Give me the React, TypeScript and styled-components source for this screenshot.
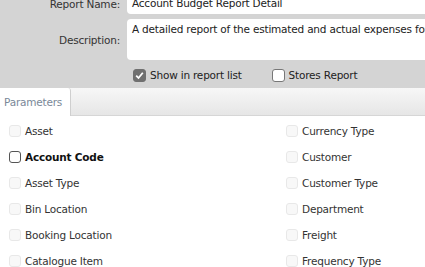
import React from 'react';
import styled, { createGlobalStyle } from 'styled-components';

const GlobalStyle = createGlobalStyle`
  html, body {
    margin: 0;
    padding: 0;
    background: #ffffff;
    font-family: "DejaVu Sans", Tahoma, sans-serif;
    font-size: 10.5px;
    letter-spacing: -0.2px;
    color: #222;
    overflow: hidden;
  }
`;

const Page = styled.div`
  width: 425px;
  height: 267px;
  overflow: hidden;
`;

const Header = styled.section`
  background: #d4d4d4;
  margin-top: -7px;
  padding-bottom: 6px;
`;

const FieldRow = styled.div`
  display: grid;
  grid-template-columns: 120px 1fr;
  column-gap: 7px;
  align-items: center;
  margin-bottom: 5px;
`;

const Label = styled.label`
  text-align: right;
  color: #333;
`;

const TextInput = styled.div`
  background: #fff;
  border-radius: 4px 0 0 4px;
  height: 21px;
  line-height: 21px;
  padding: 0 5px;
  white-space: nowrap;
  overflow: hidden;
`;

const TextArea = styled.div`
  background: #fff;
  border-radius: 4px 0 0 4px;
  height: 41px;
  padding: 4px 5px;
  box-sizing: border-box;
  white-space: nowrap;
  overflow: hidden;
`;

const OptionRow = styled.div`
  display: flex;
  align-items: center;
  padding-left: 133px;
  gap: 30px;
  height: 14px;
  margin-top: 8px;
`;

const Option = styled.label`
  display: flex;
  align-items: center;
  gap: 4px;
  color: #222;
`;

const Box = styled.span<{ $variant: 'checked' | 'empty' | 'disabled' | 'active' }>`
  display: inline-flex;
  align-items: center;
  justify-content: center;
  box-sizing: border-box;
  width: ${(p) => (p.$variant === 'checked' || p.$variant === 'empty' ? '13px' : '12px')};
  height: ${(p) => (p.$variant === 'checked' || p.$variant === 'empty' ? '13px' : '12px')};
  border-radius: 3px;
  flex-shrink: 0;
  background: ${(p) => (p.$variant === 'checked' ? '#707070' : p.$variant === 'disabled' ? '#f8f8f8' : '#fff')};
  border: 1px solid
    ${(p) =>
      p.$variant === 'checked' ? '#707070' : p.$variant === 'disabled' ? '#e8e8e8' : p.$variant === 'active' ? '#555' : '#777'};
`;

const TabBar = styled.nav`
  display: flex;
  height: 27px;
  background: linear-gradient(#f7f7f7, #e6e6e6);
  border-bottom: 1px solid #d6d6d6;
`;

const Tab = styled.div`
  display: flex;
  align-items: center;
  padding: 0 4px;
  width: 71px;
  box-sizing: border-box;
  background: #fff;
  border-right: 1px solid #cfcfcf;
  border-top-right-radius: 3px;
  color: #7a8898;
  height: 28px;
`;

const ParamGrid = styled.div`
  display: grid;
  grid-template-columns: 277px 1fr;
  padding: 2px 0 0 9px;
`;

const Param = styled.div<{ $active?: boolean }>`
  display: flex;
  align-items: center;
  gap: 4px;
  height: 26px;
  font-weight: ${(p) => (p.$active ? 'bold' : 'normal')};
  color: ${(p) => (p.$active ? '#111' : '#333')};
`;

const Check = () => (
  <svg width="9" height="9" viewBox="0 0 9 9">
    <path d="M1.2 4.6 L3.5 7 L7.8 1.8" fill="none" stroke="#fff" strokeWidth="1.8" />
  </svg>
);

const left = ['Asset', 'Account Code', 'Asset Type', 'Bin Location', 'Booking Location', 'Catalogue Item'];
const right = ['Currency Type', 'Customer', 'Customer Type', 'Department', 'Freight', 'Frequency Type'];

export default function App() {
  const rows = left.flatMap((l, i) => [
    { name: l, active: l === 'Account Code' },
    { name: right[i], active: false },
  ]);
  return (
    <Page>
      <GlobalStyle />
      <Header>
        <FieldRow>
          <Label>Report Name:</Label>
          <TextInput>Account Budget Report Detail</TextInput>
        </FieldRow>
        <FieldRow>
          <Label>Description:</Label>
          <TextArea>A detailed report of the estimated and actual expenses for each account</TextArea>
        </FieldRow>
        <OptionRow>
          <Option>
            <Box $variant="checked">
              <Check />
            </Box>
            Show in report list
          </Option>
          <Option>
            <Box $variant="empty" />
            Stores Report
          </Option>
        </OptionRow>
      </Header>
      <TabBar>
        <Tab>Parameters</Tab>
      </TabBar>
      <ParamGrid>
        {rows.map((r) => (
          <Param key={r.name} $active={r.active}>
            <Box $variant={r.active ? 'active' : 'disabled'} />
            {r.name}
          </Param>
        ))}
      </ParamGrid>
    </Page>
  );
}
